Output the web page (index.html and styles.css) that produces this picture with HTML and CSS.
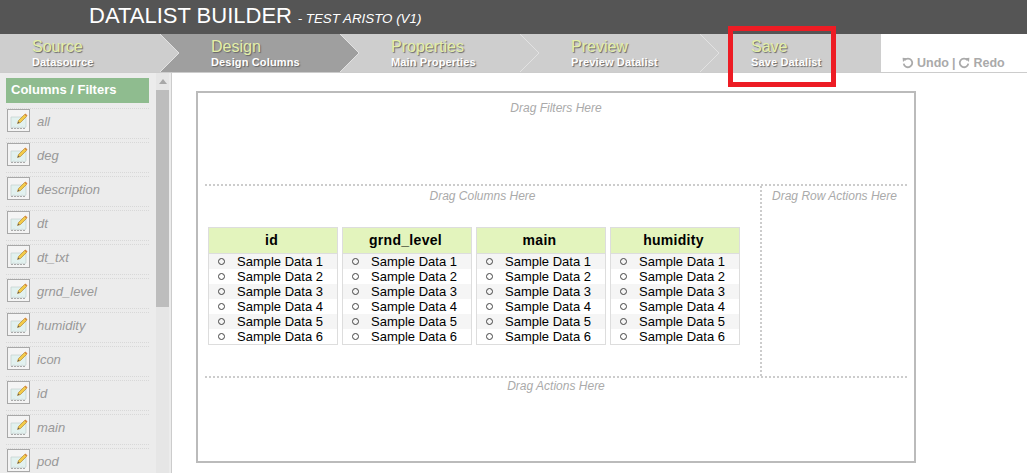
FILE: index.html
```html
<!DOCTYPE html>
<html lang="en">
<head>
<meta charset="utf-8">
<title>Datalist Builder</title>
<link rel="stylesheet" href="styles.css">
</head>
<body>
<svg class="defs" width="0" height="0" aria-hidden="true">
  <symbol id="field" viewBox="0 0 24 24">
    <rect x="0.5" y="0.5" width="22" height="22" fill="#f4f4f4" stroke="#a8a8a8"/>
    <path d="M4 8h15v10l-2 1-2-1-2 1-2-1-2 1-2-1-3 1z" fill="#e2f1ef" stroke="#c3d0ce" stroke-width="0.7"/>
    <path d="M4 19.5h15" stroke="#aaa" stroke-width="1" stroke-dasharray="2 1"/>
    <path d="M10.5 14.5l1-3 6-6 2 2-6 6z" fill="#f3cb48" stroke="#a97c2b" stroke-width="0.6"/>
    <path d="M17.5 5.5l1-1 2 2-1 1z" fill="#d9893c"/>
    <path d="M10.5 14.5l1-2 1 1z" fill="#555"/>
  </symbol>
</svg>
<header class="top">
  <h1 class="title">DATALIST BUILDER<small class="subtitle"> - TEST ARISTO (V1)</small></h1>
</header>
<nav class="bar">
  <div class="wizard">
    <svg class="chevrons" width="881" height="38" viewBox="0 0 881 38" aria-hidden="true">
      <polygon points="160,0 340,0 359,19 340,38 160,38 179,19" fill="#9f9f9f"/>
      <polyline points="160,0 179,19 160,38" fill="none" stroke="#e2e2e2"/>
      <polyline points="340,0 359,19 340,38" fill="none" stroke="#e2e2e2"/>
      <polyline points="520,0 539,19 520,38" fill="none" stroke="#e2e2e2"/>
      <polyline points="700,0 719,19 700,38" fill="none" stroke="#e2e2e2"/>
    </svg>
    <div class="step step-first"><span class="step-name">Source</span><span class="step-sub">Datasource</span></div>
    <div class="step"><span class="step-name">Design</span><span class="step-sub">Design Columns</span></div>
    <div class="step"><span class="step-name">Properties</span><span class="step-sub">Main Properties</span></div>
    <div class="step"><span class="step-name">Preview</span><span class="step-sub">Preview Datalist</span></div>
    <div class="step"><span class="step-name">Save</span><span class="step-sub">Save Datalist</span></div>
  </div>
  <div class="history">
    <svg width="12" height="12" viewBox="0 0 12 12" aria-hidden="true"><path d="M2.6 3.2A4.3 4.3 0 1 1 1.7 6.6" fill="none" stroke="#aaa" stroke-width="1.8"/><path d="M0.6 0.8L5 1.2 1 5z" fill="#aaa"/></svg>
    <span>Undo</span><span class="sep">|</span>
    <svg width="12" height="12" viewBox="0 0 12 12" aria-hidden="true"><path d="M9.4 3.2A4.3 4.3 0 1 0 10.3 6.6" fill="none" stroke="#aaa" stroke-width="1.8"/><path d="M11.4 0.8L7 1.2 11 5z" fill="#aaa"/></svg>
    <span>Redo</span>
  </div>
</nav>
<div class="highlight"></div>
<div class="content">
  <aside class="sidebar">
    <div class="palette">
      <h2 class="palette-title">Columns / Filters</h2>
      <ul class="fields">
        <li class="field"><svg class="field-icon"><use href="#field"/></svg><span>all</span></li>
        <li class="field"><svg class="field-icon"><use href="#field"/></svg><span>deg</span></li>
        <li class="field"><svg class="field-icon"><use href="#field"/></svg><span>description</span></li>
        <li class="field"><svg class="field-icon"><use href="#field"/></svg><span>dt</span></li>
        <li class="field"><svg class="field-icon"><use href="#field"/></svg><span>dt_txt</span></li>
        <li class="field"><svg class="field-icon"><use href="#field"/></svg><span>grnd_level</span></li>
        <li class="field"><svg class="field-icon"><use href="#field"/></svg><span>humidity</span></li>
        <li class="field"><svg class="field-icon"><use href="#field"/></svg><span>icon</span></li>
        <li class="field"><svg class="field-icon"><use href="#field"/></svg><span>id</span></li>
        <li class="field"><svg class="field-icon"><use href="#field"/></svg><span>main</span></li>
        <li class="field"><svg class="field-icon"><use href="#field"/></svg><span>pod</span></li>
      </ul>
    </div>
    <div class="scrollbar"><div class="scroll-arrow"></div><div class="scroll-thumb"></div></div>
  </aside>
  <main class="main">
    <section class="canvas">
      <div class="filters"><p class="hint">Drag Filters Here</p></div>
      <div class="middle">
        <div class="columns">
          <p class="hint">Drag Columns Here</p>
          <div class="tables">
            <div class="col"><h3 class="col-head">id</h3><ul class="col-rows"><li>Sample Data 1</li><li>Sample Data 2</li><li>Sample Data 3</li><li>Sample Data 4</li><li>Sample Data 5</li><li>Sample Data 6</li></ul></div>
            <div class="col"><h3 class="col-head">grnd_level</h3><ul class="col-rows"><li>Sample Data 1</li><li>Sample Data 2</li><li>Sample Data 3</li><li>Sample Data 4</li><li>Sample Data 5</li><li>Sample Data 6</li></ul></div>
            <div class="col"><h3 class="col-head">main</h3><ul class="col-rows"><li>Sample Data 1</li><li>Sample Data 2</li><li>Sample Data 3</li><li>Sample Data 4</li><li>Sample Data 5</li><li>Sample Data 6</li></ul></div>
            <div class="col"><h3 class="col-head">humidity</h3><ul class="col-rows"><li>Sample Data 1</li><li>Sample Data 2</li><li>Sample Data 3</li><li>Sample Data 4</li><li>Sample Data 5</li><li>Sample Data 6</li></ul></div>
          </div>
        </div>
        <div class="row-actions"><p class="hint">Drag Row Actions Here</p></div>
      </div>
      <div class="actions"><p class="hint">Drag Actions Here</p></div>
    </section>
  </main>
</div>
</body>
</html>
```
FILE: styles.css
```css
* { box-sizing: border-box; }
html, body { margin: 0; height: 473px; overflow: hidden; background: #fff; font-family: "Liberation Sans", Arial, sans-serif; }
ul { list-style: none; margin: 0; padding: 0; }
h1, h2, h3, p { margin: 0; }
.defs { display: block; height: 0; }

.top { height: 34px; background: #555; padding-left: 89px; }
.title { font-size: 22px; font-weight: 400; line-height: 31px; color: #fff; }
.subtitle { margin-left: 2px; font-size: 13.33px; font-style: italic; }

.bar { display: flex; height: 39px; border-bottom: 1px solid #ccc; }
.wizard { position: relative; display: flex; flex: none; width: 881px; height: 38px; padding-left: 1px; background: #cecece; }
.chevrons { position: absolute; left: 0; top: 0; }
.step { position: relative; display: flex; flex: none; flex-direction: column; width: 180px; padding: 4px 0 0 30px; }
.step-first { padding-left: 31px; }
.step-name { font-size: 16px; line-height: 18px; color: #e4efa8; text-shadow: 1px 1px 1px #666; }
.step-sub { font-size: 11px; font-weight: 700; line-height: 13px; letter-spacing: 0.15px; color: #fff; text-shadow: 1px 1px 1px #666; }
.history { display: flex; align-items: center; gap: 3px; height: 38px; padding: 19px 0 0 21px; font-size: 12.5px; font-weight: 700; color: #aaa; }

.highlight { position: absolute; left: 728px; top: 26px; width: 108px; height: 61px; border: 5px solid #ed1c24; }

.content { display: flex; height: 400px; }
.sidebar { display: flex; flex: none; width: 172px; padding-left: 6px; background: #ececec; border-right: 1px solid #ccc; }
.palette { flex: none; width: 143px; padding-top: 5px; }
.palette-title { height: 25px; padding-left: 5px; font-size: 13px; font-weight: 700; line-height: 24px; color: #fff; background: #8fbc8f; }
.fields { padding-top: 5px; }
.field { display: flex; align-items: flex-start; gap: 6px; height: 31px; margin-bottom: 3px; padding: 0 0 0 1px; border: 1px dotted #d8d8d8; border-width: 1px 0; font-size: 13px; font-style: italic; line-height: 26px; color: #999; }
.field-icon { flex: none; width: 24px; height: 24px; }
.scrollbar { flex: none; width: 13px; margin-left: 7px; padding-top: 5px; background: #e6e6e6; }
.scroll-arrow { width: 0; height: 0; margin: 1px auto 0; border: 4px solid transparent; border-top-width: 0; border-bottom: 5px solid #a8a8a8; }
.scroll-thumb { height: 217px; margin-top: 6px; background: #bdbdbd; }

.main { flex: 1; padding: 18px 0 0 24px; }
.canvas { width: 720px; height: 372px; padding: 0 7px; border: 2px solid #bbb; }
.hint { font-size: 12px; font-style: italic; line-height: 14px; color: #aaa; text-align: center; }
.filters { height: 91px; padding-top: 8px; }
.middle { display: flex; height: 194px; border: 2px dotted #ccc; border-width: 2px 0; }
.columns { flex: none; width: 555px; padding-top: 3px; }
.tables { display: flex; gap: 4px; padding: 24px 0 0 3px; }
.col { width: 130px; border: 1px solid #ddd; }
.col-head { height: 26px; padding-right: 3px; font-size: 14px; line-height: 25px; letter-spacing: 0.3px; text-align: center; color: #000; background: #e3f4bd; border-bottom: 1px solid #ddd; }
.col-rows li { display: flex; align-items: center; gap: 12px; height: 15px; padding-left: 9px; font-size: 13px; line-height: 15px; color: #000; }
.col-rows li::before { content: ""; flex: none; width: 5px; height: 5px; border: 1.5px solid #444; border-radius: 50%; }
.col-rows li:nth-child(odd) { background: #f5f5f5; }
.row-actions { flex: 1; padding: 3px 0 0 0; border-left: 2px dotted #ccc; }
.actions { padding-top: 1px; }
```
